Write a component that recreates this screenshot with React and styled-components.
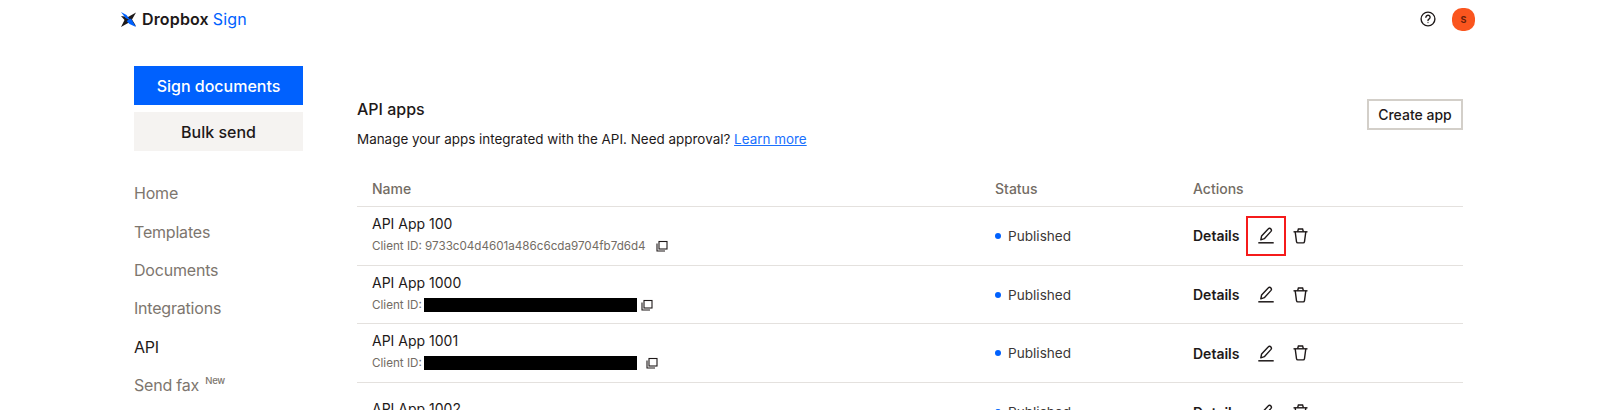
import styled, {createGlobalStyle} from "styled-components";

const GlobalStyle = createGlobalStyle`
    html, body {
        margin: 0;
        height: 410px;
        overflow: hidden;
        background: #fff;
        font-family: "Inter", "Liberation Sans", sans-serif;
        color: #1e1919;
    }
`

const Page = styled.div`
    width: 1600px;
    height: 410px;
    overflow: hidden;
`

const TopBar = styled.header`
    display: flex;
    align-items: center;
    justify-content: space-between;
    height: 38px;
    padding: 0 125px 0 121px;
`

const Logo = styled.div`
    display: flex;
    align-items: center;
    gap: 6px;
    font-size: 16px;
    font-weight: 600;
    letter-spacing: 0.15px;
    & span { color: #0061fe; font-weight: 400; margin-left: -2px; }
`

const TopActions = styled.div`
    display: flex;
    align-items: center;
    gap: 16px;
`

const Avatar = styled.div`
    width: 23px;
    height: 23px;
    border-radius: 10px;
    background: #fa551e;
    color: #68200b;
    font-size: 9px;
    font-weight: 700;
    display: flex;
    align-items: center;
    justify-content: center;
`

const Body = styled.div`
    display: grid;
    grid-template-columns: 169px 1106px;
    column-gap: 54px;
    padding: 28px 0 0 134px;
`

const Sidebar = styled.aside`
    display: flex;
    flex-direction: column;
`

const ActionButton = styled.div`
    height: 39px;
    margin-bottom: 7px;
    display: flex;
    align-items: center;
    justify-content: center;
    font-size: 16px;
    font-weight: 500;
    background: ${p => p.$primary ? "#0061fe" : "#f5f3f1"};
    color: ${p => p.$primary ? "#fff" : "#1e1919"};
`

const Nav = styled.nav`
    display: flex;
    flex-direction: column;
    margin-top: 16px;
`

const NavItem = styled.div`
    height: 38.4px;
    display: flex;
    align-items: center;
    font-size: 16px;
    letter-spacing: -0.2px;
    color: ${p => p.$active ? "#1e1919" : "#7d766e"};
`

const NewTag = styled.sup`
    font-size: 9.5px;
    font-weight: 500;
    margin: -8px 0 0 6px;
    line-height: 1;
`

const Main = styled.main`
    padding-top: 33px;
`

const TitleRow = styled.div`
    display: flex;
    justify-content: space-between;
    align-items: flex-start;
    height: 66px;
`

const Title = styled.h1`
    margin: 0 0 10px;
    font-size: 16px;
    line-height: 20px;
    font-weight: 500;
`

const Intro = styled.p`
    margin: 0;
    font-size: 13.45px;
    line-height: 20px;
`

const LearnMore = styled.a`
    color: #1a70fe;
    text-decoration: underline;
`

const CreateButton = styled.div`
    width: 96px;
    height: 31px;
    box-sizing: border-box;
    border: 2px solid #d3cfc9;
    display: flex;
    align-items: center;
    justify-content: center;
    font-size: 14px;
    font-weight: 500;
`

const Row = styled.div`
    display: grid;
    grid-template-columns: 623px 198px 1fr;
    align-items: center;
    height: ${p => p.$head ? "42px" : "58.7px"};
    padding-left: 15px;
    padding-top: ${p => p.$head ? "6px" : "0"};
    border-bottom: ${p => p.$last ? "none" : "1.5px solid #e4e1de"};
    box-sizing: border-box;
`

const HeadCell = styled.div`
    font-size: 14px;
    font-weight: 500;
    color: #736c64;
`

const NameCell = styled.div`
    padding-bottom: 3px;
`

const AppName = styled.div`
    font-size: 14px;
    line-height: 20px;
    margin-bottom: 3px;
`

const ClientLine = styled.div`
    display: flex;
    align-items: center;
    font-size: 11.65px;
    line-height: 18px;
    color: #736c64;
`

const Redaction = styled.div`
    width: 213px;
    height: 14px;
    background: #000;
    margin-left: 2px;
`

const CopyButton = styled.span`
    display: inline-flex;
    margin-left: ${p => p.$gap}px;
    color: #1e1919;
`

const Status = styled.div`
    display: flex;
    align-items: center;
    gap: 7px;
    font-size: 13.6px;
    color: #3b3737;
`

const Dot = styled.span`
    width: 6px;
    height: 6px;
    border-radius: 50%;
    background: #0061fe;
`

const Actions = styled.div`
    display: flex;
    align-items: center;
`

const DetailsLink = styled.span`
    font-size: 14px;
    font-weight: 600;
    width: 54px;
`

const IconButton = styled.span`
    position: relative;
    display: flex;
    align-items: center;
    justify-content: center;
    width: 38px;
    height: 38px;
    ${p => p.$marked && "outline: 2px solid #f51b1b; outline-offset: -1px;"}
`

const TrashButton = styled(IconButton)`
    width: 24px;
    margin-left: 3px;
`

const LogoMark = () => (
    <svg width="15" height="15" viewBox="0 0 15 15">
        <path d="M15 0.5 L11 7.5 L15 14 L8 10.5 L0 15 L3.5 8 L0 4 L7 5 Z" fill="#1e1919"/>
        <path d="M0 0 L5.5 3 L9.5 8.5 L4.5 6 Z" fill="#0061fe"/>
        <path d="M5.5 9 L10 6.5 L15 15 L8.5 12 Z" fill="#0061fe"/>
    </svg>
)

const HelpIcon = () => (
    <svg width="16" height="16" viewBox="0 0 16 16" fill="none" stroke="#1e1919" strokeWidth="1.4">
        <circle cx="8" cy="8" r="6.9"/>
        <path d="M5.9 6.3 a2.1 2 0 1 1 3.3 1.6 c-.8.5-1.2.9-1.2 1.7" strokeLinecap="round"/>
        <circle cx="8" cy="11.6" r=".6" fill="#1e1919" stroke="none"/>
    </svg>
)

const CopyIcon = () => (
    <svg width="12" height="12" viewBox="0 0 12 12" fill="none" stroke="#1e1919" strokeWidth="1.1">
        <rect x="3" y="1.5" width="8" height="7.5"/>
        <path d="M1 3.5 V11 H9"/>
    </svg>
)

const PencilIcon = () => (
    <svg width="16" height="17" viewBox="0 0 16 17" fill="none" stroke="#1e1919" strokeWidth="1.4">
        <path d="M2.8 12.8 L3.6 9 L10.4 1.8 A1.5 1.5 0 0 1 13 2.2 A1.7 1.7 0 0 1 13 4.4 L6.3 11.7 Z" strokeLinejoin="round"/>
        <path d="M0.3 15.8 H15.7" strokeWidth="1.5"/>
    </svg>
)

const TrashIcon = () => (
    <svg width="15" height="16" viewBox="0 0 15 16" fill="none" stroke="#1e1919" strokeWidth="1.4">
        <path d="M0.5 3.8 H14.5"/>
        <path d="M4.6 3.8 L5.4 1 H9.6 L10.4 3.8"/>
        <path d="M2.2 3.8 L3.5 13.6 Q3.7 14.9 4.8 14.9 H10.2 Q11.3 14.9 11.5 13.6 L12.8 3.8"/>
    </svg>
)

const apps = [
    {name: "API App 100", clientId: "9733c04d4601a486c6cda9704fb7d6d4", copyGap: 10, marked: true},
    {name: "API App 1000", copyGap: 4},
    {name: "API App 1001", copyGap: 9},
    {name: "API App 1002", last: true},
];

const AppRow = ({app}) => (
    <Row $last={app.last}>
        <NameCell>
            <AppName>{app.name}</AppName>
            {app.copyGap && (
                <ClientLine>
                    Client ID:{app.clientId ? <>&nbsp;{app.clientId}</> : <Redaction/>}
                    <CopyButton $gap={app.copyGap}><CopyIcon/></CopyButton>
                </ClientLine>
            )}
        </NameCell>
        <Status><Dot/>Published</Status>
        <Actions>
            <DetailsLink>Details</DetailsLink>
            <IconButton $marked={app.marked}><PencilIcon/></IconButton>
            <TrashButton><TrashIcon/></TrashButton>
        </Actions>
    </Row>
);

const App = () => {
    return (
        <Page>
            <GlobalStyle/>
            <TopBar>
                <Logo><LogoMark/>Dropbox <span>Sign</span></Logo>
                <TopActions><HelpIcon/><Avatar>S</Avatar></TopActions>
            </TopBar>
            <Body>
                <Sidebar>
                    <ActionButton $primary>Sign documents</ActionButton>
                    <ActionButton>Bulk send</ActionButton>
                    <Nav>
                        <NavItem>Home</NavItem>
                        <NavItem>Templates</NavItem>
                        <NavItem>Documents</NavItem>
                        <NavItem>Integrations</NavItem>
                        <NavItem $active>API</NavItem>
                        <NavItem>Send fax <NewTag>New</NewTag></NavItem>
                    </Nav>
                </Sidebar>
                <Main>
                    <TitleRow>
                        <div>
                            <Title>API apps</Title>
                            <Intro>Manage your apps integrated with the API. Need approval? <LearnMore>Learn more</LearnMore></Intro>
                        </div>
                        <CreateButton>Create app</CreateButton>
                    </TitleRow>
                    <Row $head>
                        <HeadCell>Name</HeadCell>
                        <HeadCell>Status</HeadCell>
                        <HeadCell>Actions</HeadCell>
                    </Row>
                    {apps.map(app => <AppRow key={app.name} app={app}/>)}
                </Main>
            </Body>
        </Page>
    );
};

export default App;
